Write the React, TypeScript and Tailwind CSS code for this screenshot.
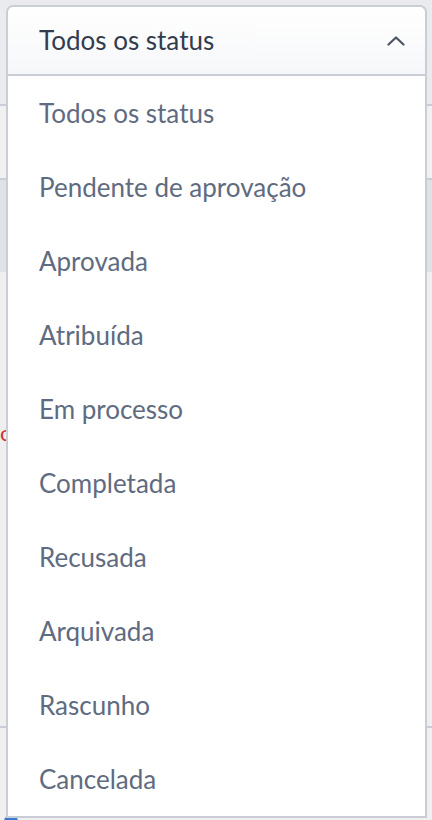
const statuses = [
  "Todos os status",
  "Pendente de aprovação",
  "Aprovada",
  "Atribuída",
  "Em processo",
  "Completada",
  "Recusada",
  "Arquivada",
  "Rascunho",
  "Cancelada",
];

function ChevronUp() {
  return (
    <svg width="18" height="10" viewBox="0 0 18 10" fill="none">
      <path
        d="M1.5 8.5 L9 1.5 L16.5 8.5"
        stroke="#4b5563"
        strokeWidth="2.2"
        strokeLinecap="round"
        strokeLinejoin="round"
      />
    </svg>
  );
}

export default function App() {
  return (
    <div
      className="relative h-[820px] w-[432px] overflow-hidden bg-[#eceef1]"
      style={{ fontFamily: "Lato, 'Open Sans', sans-serif" }}
    >
      {/* page behind */}
      <div className="flex h-full flex-col">
        <div className="h-[106px] border-b-2 border-[#c9ced6] bg-[#e9ebee]" />
        <div className="h-[74px] border-b-2 border-[#c9ced6] bg-[#f1f1f1]" />
        <div className="h-[92px] bg-[#dfe2e7]" />
        <div className="flex-1 bg-[#efefef]">
          <div className="mt-[150px] text-[22px] leading-none text-[#d0312d]">o</div>
        </div>
        <div className="relative h-[94px] border-t-2 border-[#c9ced6] bg-[#f0f0f0]">
          <div className="absolute -bottom-[6px] left-[4px] h-[10px] w-[14px] rounded-full bg-[#3b7bd4]" />
        </div>
      </div>

      {/* dropdown */}
      <div className="absolute left-[6px] top-[5px] w-[421px]">
        <div className="flex h-[69px] items-center justify-between rounded-t-[7px] border-2 border-b-0 border-[#c9ced6] bg-gradient-to-b from-white to-[#f6f7f9] pl-[31px] pr-[20px]">
          <span className="text-[26px] text-[#323c4c]">Todos os status</span>
          <ChevronUp />
        </div>
        <ul className="flex flex-col border-2 border-[#c9ced6] bg-white">
          {statuses.map((s) => (
            <li
              key={s}
              className="flex h-[74px] items-center pl-[31px] text-[26px] text-[#5f6b80]"
            >
              {s}
            </li>
          ))}
        </ul>
      </div>
    </div>
  );
}
